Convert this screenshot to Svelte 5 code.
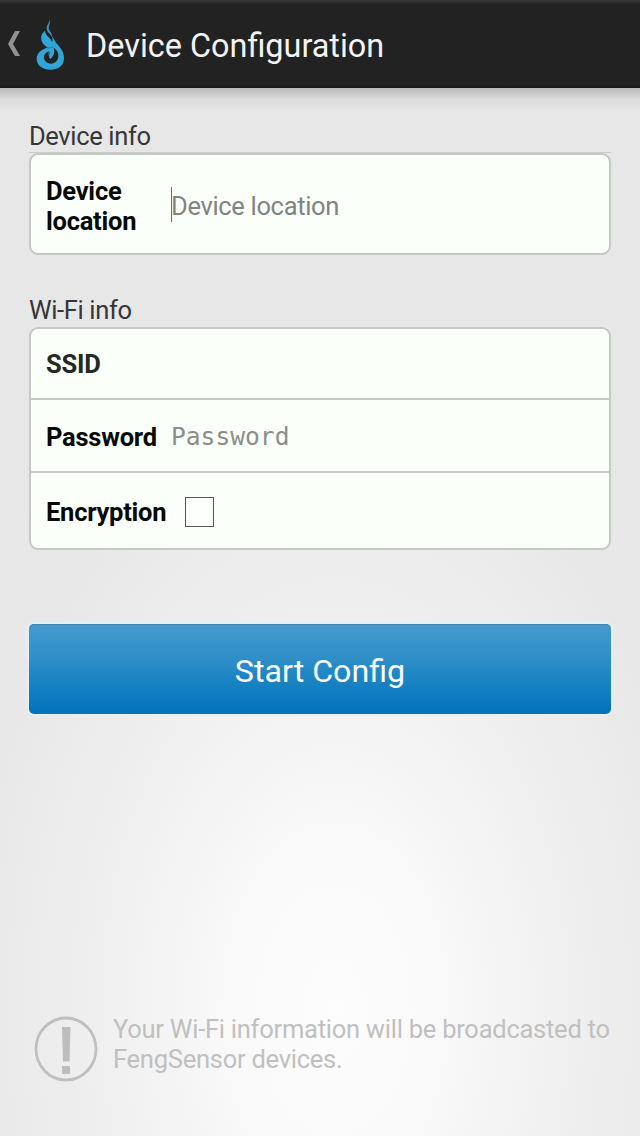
<script>
  let location = $state('');
  let password = $state('');
  let encrypted = $state(false);
</script>

<div class="screen">
  <header>
    <svg class="back" width="14" height="28" viewBox="0 0 14 28" aria-hidden="true">
      <path d="M8 1h5L6 14l7 12H8L1 14z" fill="#929292" />
    </svg>
    <svg class="flame" width="30" height="54" viewBox="105 50 90 162" aria-hidden="true">
      <path fill="#32a5d8" fill-rule="evenodd" d="M135 91C126 98 121 108 125 121C128 132 137 137 143 142C126 146 110 157 110 176C110 196 128 208 152 208C176 208 192 195 192 173C192 151 178 139 168 127C163 120 162 115 156 108C157 113 158 119 157 125C151 111 136 107 135 91zM161 142C171 149 176 157 175 168C174 182 165 190 153 190C140 190 132 181 132 171C132 161 140 154 149 153C143 159 142 168 150 176C158 170 166 158 161 142z" />
      <path d="M150 57C147 70 138 77 140 87C142 97 152 101 157 112C157 103 154 97 149 91C142 81 152 73 150 57z" fill="#418fb3" />
      <path d="M138 140C147 145 157 143 161 137" fill="none" stroke="#205f7c" stroke-width="2" />
      <path d="M149 153C145 160 145 166 150 177C159 168 166 157 161 144C160 149 155 152 149 153z" fill="#32a5d8" />
      <path d="M149 157C144 163 145 170 149 176" fill="none" stroke="#222" stroke-width="3" />
    </svg>
    <h1>Device Configuration</h1>
  </header>

  <main>
    <h2 class="ruled">Device info</h2>
    <section class="card">
      <label class="row location">
        <span class="name">Device<br />location</span>
        <span class="entry"><i class="caret"></i><input class="text" placeholder="Device location" bind:value={location} /></span>
      </label>
    </section>

    <h2 class="second">Wi-Fi info</h2>
    <section class="card">
      <div class="row ssid"><span class="name">SSID</span></div>
      <label class="row password">
        <span class="name">Password</span>
        <span class="entry"><input class="mono" type="password" placeholder="Password" bind:value={password} /></span>
      </label>
      <label class="row encryption">
        <span class="name enc">Encryption</span>
        <input class="check" type="checkbox" bind:checked={encrypted} />
      </label>
    </section>

    <button type="button"><span>Start Config</span></button>
  </main>

  <footer>
    <svg width="64" height="66" viewBox="0 0 64 66" aria-hidden="true">
      <ellipse cx="32" cy="33" rx="30" ry="31" fill="none" stroke="#bfbfbf" stroke-width="2.800" />
      <path d="M28 11h8.500l-1 34.500h-6.500zM28 50h8v8h-8z" fill="#bdbdbd" />
    </svg>
    <p>Your Wi-Fi information will be broadcasted to<br />FengSensor devices.</p>
  </footer>
</div>

<style>
  :global(body) { margin: 0; }
  .screen {
    box-sizing: border-box;
    width: 640px;
    height: 1136px;
    display: flex;
    flex-direction: column;
    overflow: hidden;
    font-family: Roboto, sans-serif;
    background: radial-gradient(ellipse 440px 720px at 335px 1010px, #fdfdfd 0, #f9f9f9 24%, #efefef 55%, #e8e8e8 84%, #e7e7e7 100%);
  }
  header {
    box-sizing: border-box;
    height: 88px;
    flex: none;
    display: flex;
    align-items: center;
    padding-left: 7px;
    background: linear-gradient(#383838 0, #303030 2px, #222 4px, #222 84px, #171717 88px);
  }
  .flame { margin: 0 0 1px 14px; }
  h1 {
    margin: 4px 0 0 21px;
    font-size: 32.400px;
    font-weight: 400;
    line-height: 40px;
    color: #f3f3f3;
    white-space: nowrap;
  }
  main {
    padding: 32px 29px 0;
    background: linear-gradient(#0003 0, #0000000d 11px, transparent 24px);
  }
  h2 {
    box-sizing: border-box;
    margin: 0;
    height: 33px;
    line-height: 33px;
    font-size: 25.500px;
    font-weight: 400;
    letter-spacing: -0.360px;
    color: #363636;
  }
  .ruled { border-bottom: 1px solid #cdcbcb; }
  .second { margin-top: 39px; }
  .card {
    border: 2px solid #c4c9c4;
    border-radius: 9px;
    background: #fafffa;
    box-sizing: border-box;
    width: 582px;
    overflow: hidden;
  }
  .row {
    display: flex;
    align-items: center;
    box-sizing: border-box;
    padding-left: 15px;
  }
  .location { height: 98px; padding-top: 3px; }
  .ssid { height: 69px; }
  .password { height: 73px; border-top: 2px solid #c4c9c4; padding-top: 2px; }
  .encryption { height: 77px; border-top: 2px solid #c4c9c4; padding-top: 3px; }
  .name {
    width: 124px;
    font-size: 25.500px;
    font-weight: 700;
    line-height: 30px;
    letter-spacing: -0.240px;
    color: #080a08;
  }
  .ssid .name { color: #252825; }
  .entry { display: flex; align-items: center; flex: 1; }
  .caret { width: 1px; height: 35px; background: #6d726d; margin: -2px -1px 0 1px; }
  input { margin: 0; }
  .text, .mono {
    border: 0;
    padding: 0;
    width: 380px;
    background: transparent;
    outline: 0;
    font: 25.500px/32px Roboto, sans-serif;
    letter-spacing: -0.330px;
  }
  .mono {
    font: 24.600px/32px "DejaVu Sans Mono", monospace;
    letter-spacing: 0;
    margin-left: 1px;
  }
  input::placeholder { color: #808580; opacity: 1; }
  .mono::placeholder { color: #8a8f8a; }
  .enc { width: 139px; }
  .check {
    appearance: none;
    box-sizing: border-box;
    width: 29px;
    height: 30px;
    border: 1px solid #555855;
    background: #fcfffc;
  }
  .check:checked { background: #3193cc; }
  button {
    display: block;
    width: 582px;
    height: 90px;
    margin-top: 74px;
    padding: 3px 0 0;
    border: 0;
    border-radius: 5px;
    background: linear-gradient(#4699cf, #3290c9 35%, #1882c2 65%, #0674bc 95%);
    box-shadow: 0 0 1px 1.500px #e2f1f8, inset 0 1px 1px #4286b0;
    font: 32.200px/40px Roboto, sans-serif;
    color: #fafdff;
  }
  footer {
    display: flex;
    margin-top: auto;
    padding: 0 0 54px 34px;
    align-items: flex-end;
  }
  p {
    margin: 0 0 8px 15px;
    font-size: 25.500px;
    line-height: 30px;
    letter-spacing: -0.250px;
    color: #c0c0c0;
    white-space: nowrap;
  }
</style>
